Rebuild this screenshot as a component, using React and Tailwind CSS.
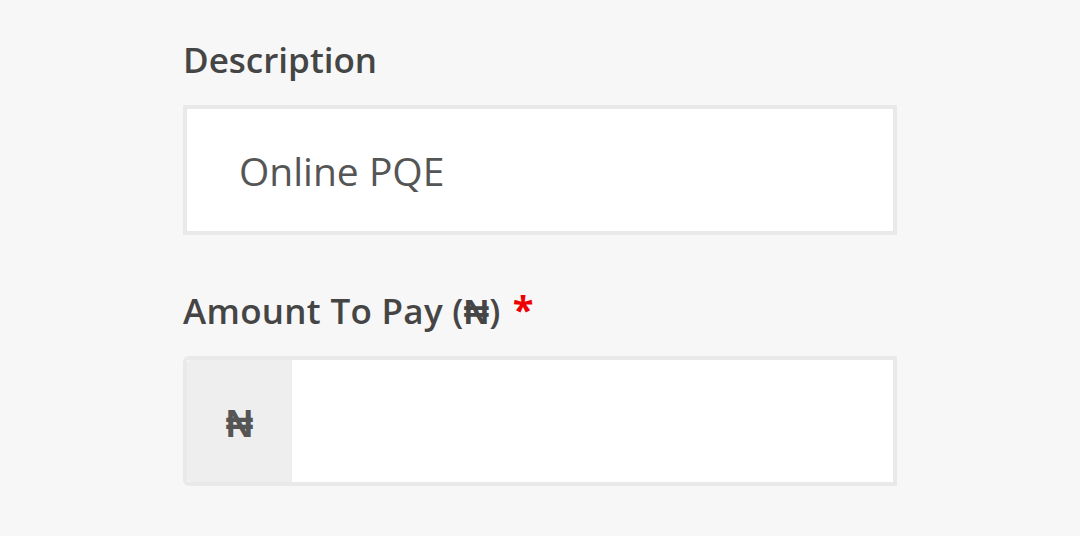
export default function App() {
  return (
    <div
      className="min-h-[536px] w-[1080px] bg-[#f7f7f7] pl-[183px] pt-[36px]"
      style={{ fontFamily: '"Open Sans", sans-serif' }}
    >
      <div className="flex w-[714px] flex-col">
        <label className="text-[35px] font-semibold leading-[48px] text-[#454545]">
          Description
        </label>
        <div className="mt-[21px] flex h-[130px] items-center border-[4px] border-[#e9e9e9] bg-white pl-[52px]">
          <span className="text-[39px] leading-none text-[#555]">Online PQE</span>
        </div>

        <label className="mt-[52px] h-[48px] text-[35px] font-semibold leading-[48px] tracking-[0.3px] text-[#454545]">
          Amount To Pay (<span className="font-bold">₦</span>)
          <span className="ml-[12px] text-[38px] font-bold leading-none text-[#e00]">*</span>
        </label>
        <div className="mt-[21px] flex h-[130px] rounded-l-[6px] border-[4px] border-[#e9e9e9] bg-white">
          <div className="flex w-[105px] items-center justify-center rounded-l-[4px] bg-[#eeeeee] pt-[2px] text-[38px] font-semibold text-[#555]">
            ₦
          </div>
          <div className="flex-1 bg-white" />
        </div>
      </div>
    </div>
  );
}
